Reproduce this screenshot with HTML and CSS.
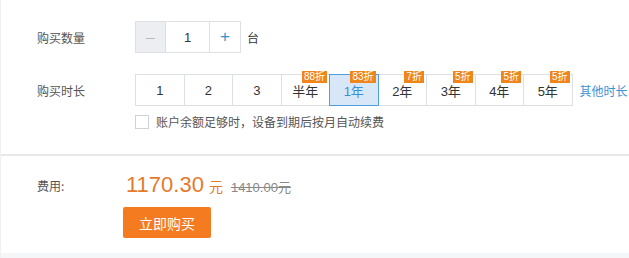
FILE: index.html
```html
<!DOCTYPE html>
<html lang="zh">
<head>
<meta charset="utf-8">
<link rel="stylesheet" href="styles.css">
</head>
<body>
<div class="page">
  <div class="config">
    <div class="row row-qty">
      <div class="label">购买数量</div>
      <div class="qty">
        <span class="qty-btn minus">—</span>
        <span class="qty-val">1</span>
        <span class="qty-btn plus">+</span>
      </div>
      <span class="unit">台</span>
    </div>
    <div class="row row-dur">
      <div class="label">购买时长</div>
      <div class="durs">
        <span class="dur">1</span>
        <span class="dur">2</span>
        <span class="dur">3</span>
        <span class="dur">半年<i class="badge">88折</i></span>
        <span class="dur active">1年<i class="badge">83折</i></span>
        <span class="dur">2年<i class="badge">7折</i></span>
        <span class="dur">3年<i class="badge">5折</i></span>
        <span class="dur">4年<i class="badge">5折</i></span>
        <span class="dur">5年<i class="badge">5折</i></span>
      </div>
      <a class="other">其他时长</a>
    </div>
    <div class="row row-auto">
      <span class="check"></span>
      <span class="auto-text">账户余额足够时，设备到期后按月自动续费</span>
    </div>
  </div>
  <div class="fee">
    <div class="fee-row">
      <div class="label fee-label">费用:</div>
      <div class="price"><span class="amount">1170.30</span><span class="yuan">元</span><span class="orig">1410.00元</span></div>
    </div>
    <div class="buy-row">
      <button class="buy">立即购买</button>
    </div>
  </div>
  <div class="foot"></div>
</div>
</body>
</html>
```
FILE: styles.css
```css
* { box-sizing: border-box; }
html, body { margin: 0; padding: 0; background: #fff; }
body {
  font-family: "Noto Sans CJK SC", "Liberation Sans", sans-serif;
  font-size: 12px;
  color: #333;
}
.page {
  width: 629px;
  height: 258px;
  border-left: 1px solid #eef0f3;
  display: flex;
  flex-direction: column;
}
.config {
  padding: 21px 0 0 36px;
  height: 154px;
}
.row { display: flex; align-items: center; }
.label {
  width: 98px;
  color: #555;
  font-size: 12px;
}
.qty {
  display: flex;
  height: 32px;
  border: 1px solid #dcdfe4;
  background: #fff;
}
.qty-btn, .qty-val {
  display: flex;
  align-items: center;
  justify-content: center;
  height: 30px;
}
.minus {
  width: 30px;
  background: #eceef2;
  color: #a8adb5;
  font-size: 11px;
  border-right: 1px solid #dcdfe4;
}
.qty-val {
  width: 44px;
  font-family: "Liberation Sans", sans-serif;
  font-size: 13px;
  color: #333;
  border-right: 1px solid #dcdfe4;
}
.plus {
  width: 30px;
  color: #2b95d6;
  font-size: 17px;
  font-family: "Liberation Sans", sans-serif;
}
.unit { margin-left: 6px; color: #333; font-size: 12px; }
.row-dur { margin-top: 21px; }
.durs { display: flex; }
.dur {
  position: relative;
  width: 49.5px;
  height: 32px;
  margin-left: -1px;
  border: 1px solid #dcdfe4;
  display: flex;
  align-items: center;
  justify-content: center;
  font-family: "Liberation Sans", "Noto Sans CJK SC", sans-serif;
  font-size: 13px;
  color: #333;
  background: #fff;
}
.dur:first-child { margin-left: 0; }
.dur.active {
  z-index: 1;
  border-color: #4d9fde;
  background: #d7e7f7;
  color: #3b8fd6;
}
.badge {
  position: absolute;
  top: -4px;
  right: 2px;
  z-index: 2;
  height: 12px;
  line-height: 12px;
  padding: 0 2px;
  font-style: normal;
  font-size: 10px;
  color: #fff;
  background: #f08519;
}
.other {
  margin-left: 7px;
  color: #3a93d4;
  font-size: 12px;
}
.row-auto { margin-top: 7px; padding-left: 98px; }
.check {
  width: 14px;
  height: 14px;
  border: 1px solid #cfd3d8;
  background: #fff;
}
.auto-text { margin-left: 7px; color: #555; font-size: 12px; }
.fee {
  border-top: 2px solid #e7e8ea;
  padding: 14px 0 0 36px;
  height: 99px;
}
.fee-row { display: flex; align-items: center; height: 30px; }
.fee-label { width: 86px; }
.price { display: flex; align-items: baseline; margin-left: 3px; }
.amount {
  font-family: "Liberation Sans", sans-serif;
  font-size: 22px;
  color: #e57a2c;
}
.yuan { margin-left: 5px; color: #e57a2c; font-size: 14px; }
.orig {
  margin-left: 8px;
  color: #888;
  font-family: "Liberation Sans", "Noto Sans CJK SC", sans-serif;
  font-size: 13px;
  text-decoration: line-through;
}
.buy-row { padding-left: 86px; margin-top: 7px; }
.buy {
  width: 88px;
  height: 31px;
  border: 0;
  border-radius: 2px;
  background: #f57b20;
  color: #fff;
  font-family: "Noto Sans CJK SC", sans-serif;
  font-size: 14px;
  padding: 0;
}
.foot { flex: 1; background: #f5f6f8; }
```
